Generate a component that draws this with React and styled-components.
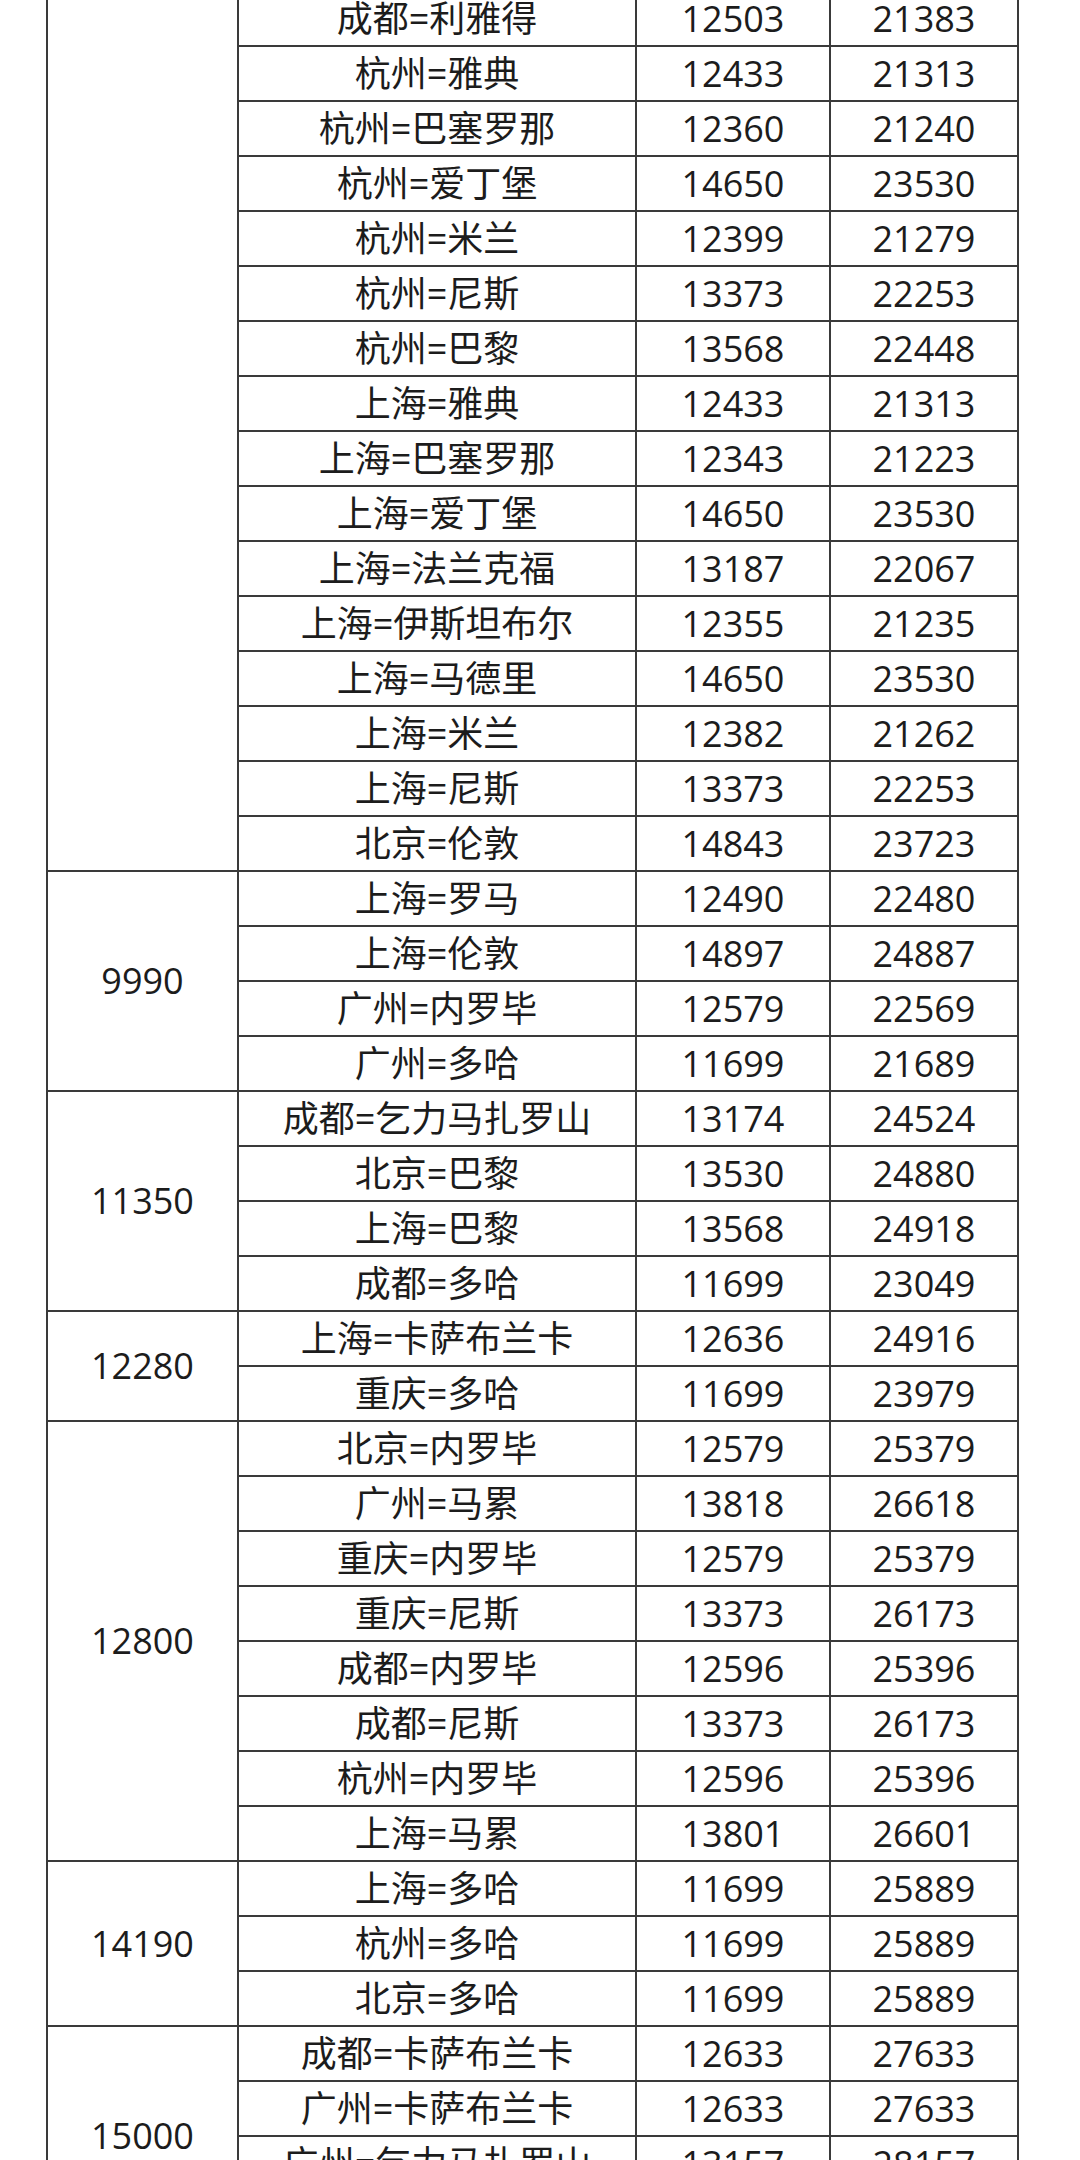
import React from "react";
import styled, { createGlobalStyle } from "styled-components";

const Global = createGlobalStyle`
  html, body { margin: 0; padding: 0; background: #ffffff; }
  body { font-family: "Open Sans", "Noto Sans CJK SC", sans-serif; }
`;

const Page = styled.div`
  width: 1080px;
  height: 2160px;
  overflow: hidden;
  background: #ffffff;
  padding-left: 46px;
  box-sizing: border-box;
`;

const Table = styled.table`
  margin-top: -10px;
  border-collapse: collapse;
  table-layout: fixed;
  width: 973px;
  font-family: "Open Sans", "Noto Sans CJK SC", sans-serif;
  font-size: 36px;
  color: #1c1c1c;
`;

const Col = styled.col`
  width: ${(p) => p.$w}px;
`;

const Row = styled.tr`
  height: 55px;
`;

const Cell = styled.td`
  border: 2px solid #3a3a3a;
  padding: 0;
  text-align: center;
  vertical-align: middle;
  white-space: nowrap;
  line-height: 1;
  height: 53px;
`;

const PriceCell = styled(Cell)`
  color: #1c1c1c;
`;

const groups = [
  {
    price: "",
    rows: [
      ["成都=利雅得", "12503", "21383"],
      ["杭州=雅典", "12433", "21313"],
      ["杭州=巴塞罗那", "12360", "21240"],
      ["杭州=爱丁堡", "14650", "23530"],
      ["杭州=米兰", "12399", "21279"],
      ["杭州=尼斯", "13373", "22253"],
      ["杭州=巴黎", "13568", "22448"],
      ["上海=雅典", "12433", "21313"],
      ["上海=巴塞罗那", "12343", "21223"],
      ["上海=爱丁堡", "14650", "23530"],
      ["上海=法兰克福", "13187", "22067"],
      ["上海=伊斯坦布尔", "12355", "21235"],
      ["上海=马德里", "14650", "23530"],
      ["上海=米兰", "12382", "21262"],
      ["上海=尼斯", "13373", "22253"],
      ["北京=伦敦", "14843", "23723"],
    ],
  },
  {
    price: "9990",
    rows: [
      ["上海=罗马", "12490", "22480"],
      ["上海=伦敦", "14897", "24887"],
      ["广州=内罗毕", "12579", "22569"],
      ["广州=多哈", "11699", "21689"],
    ],
  },
  {
    price: "11350",
    rows: [
      ["成都=乞力马扎罗山", "13174", "24524"],
      ["北京=巴黎", "13530", "24880"],
      ["上海=巴黎", "13568", "24918"],
      ["成都=多哈", "11699", "23049"],
    ],
  },
  {
    price: "12280",
    rows: [
      ["上海=卡萨布兰卡", "12636", "24916"],
      ["重庆=多哈", "11699", "23979"],
    ],
  },
  {
    price: "12800",
    rows: [
      ["北京=内罗毕", "12579", "25379"],
      ["广州=马累", "13818", "26618"],
      ["重庆=内罗毕", "12579", "25379"],
      ["重庆=尼斯", "13373", "26173"],
      ["成都=内罗毕", "12596", "25396"],
      ["成都=尼斯", "13373", "26173"],
      ["杭州=内罗毕", "12596", "25396"],
      ["上海=马累", "13801", "26601"],
    ],
  },
  {
    price: "14190",
    rows: [
      ["上海=多哈", "11699", "25889"],
      ["杭州=多哈", "11699", "25889"],
      ["北京=多哈", "11699", "25889"],
    ],
  },
  {
    price: "15000",
    rows: [
      ["成都=卡萨布兰卡", "12633", "27633"],
      ["广州=卡萨布兰卡", "12633", "27633"],
      ["广州=乞力马扎罗山", "13157", "28157"],
      ["北京=乞力马扎罗山", "13157", "28157"],
    ],
  },
];

export default function App() {
  return (
    <Page>
      <Global />
      <Table>
        <colgroup>
          <Col $w={191} />
          <Col $w={398} />
          <Col $w={194} />
          <Col $w={188} />
        </colgroup>
        <tbody>
          {groups.map((g, gi) =>
            g.rows.map((r, ri) => (
              <Row key={`${gi}-${ri}`}>
                {ri === 0 && <PriceCell rowSpan={g.rows.length}>{g.price}</PriceCell>}
                <Cell>{r[0]}</Cell>
                <Cell>{r[1]}</Cell>
                <Cell>{r[2]}</Cell>
              </Row>
            ))
          )}
        </tbody>
      </Table>
    </Page>
  );
}
